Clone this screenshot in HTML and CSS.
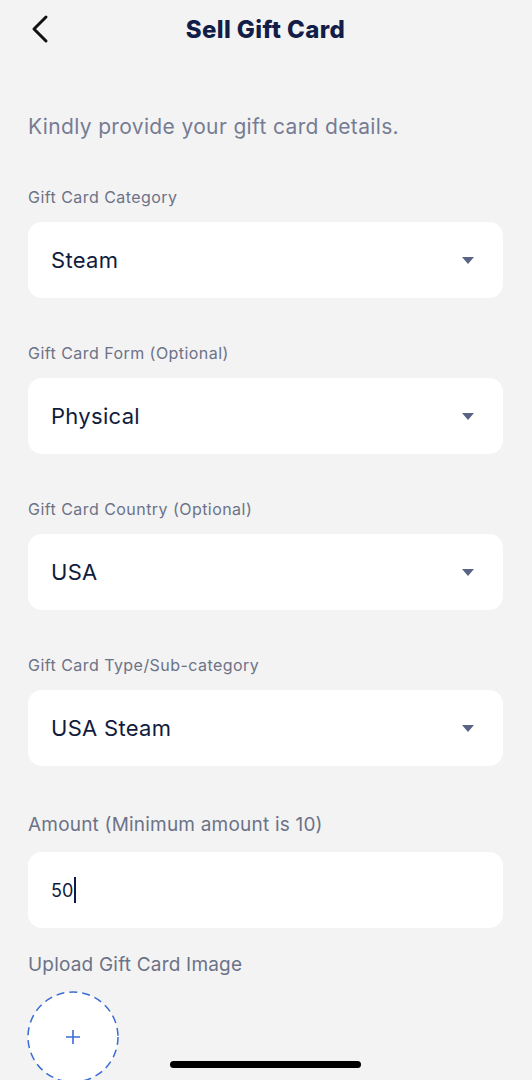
FILE: index.html
```html
<!DOCTYPE html>
<html lang="en">
  <head>
    <meta charset="UTF-8" />
    <meta name="viewport" content="width=device-width, initial-scale=1.0" />
    <title>Sell Gift Card</title>
    <link rel="stylesheet" href="styles.css">
  </head>
  <body>
    <div class="header">
      <button class="back" aria-label="Back">
        <svg width="20" height="30" viewBox="0 0 20 30">
          <path d="M16 3 L4 15 L16 27" fill="none" stroke="#111" stroke-width="3" stroke-linecap="round" stroke-linejoin="round" />
        </svg>
      </button>
      <h1>Sell Gift Card</h1>
      <div></div>
    </div>

    <p class="intro">Kindly provide your gift card details.</p>

    <div class="form">
      <div class="field">
        <label>Gift Card Category</label>
        <div class="select">
          <span>Steam</span>
          <span class="caret"></span>
        </div>
      </div>

      <div class="field">
        <label>Gift Card Form (Optional)</label>
        <div class="select">
          <span>Physical</span>
          <span class="caret"></span>
        </div>
      </div>

      <div class="field">
        <label>Gift Card Country (Optional)</label>
        <div class="select">
          <span>USA</span>
          <span class="caret"></span>
        </div>
      </div>

      <div class="field">
        <label>Gift Card Type/Sub-category</label>
        <div class="select">
          <span>USA Steam</span>
          <span class="caret"></span>
        </div>
      </div>

      <div class="field big">
        <label>Amount (Minimum amount is 10)</label>
        <div class="select input">
          <span>50</span><span class="cursor"></span>
        </div>
      </div>

      <div class="field big upload">
        <label>Upload Gift Card Image</label>
        <div class="circle">
          <svg width="92" height="92" viewBox="0 0 92 92">
            <circle cx="46" cy="46" r="45" fill="#fff" stroke="#3b6cd4" stroke-width="1.5" stroke-dasharray="8 5" />
            <path d="M46 39 V53 M39 46 H53" stroke="#3b6cd4" stroke-width="1.6" />
          </svg>
        </div>
      </div>
    </div>

    <div class="home-bar"></div>
  </body>
</html>
```

FILE: styles.css
```css
body {
  margin: 0;
  padding: 0 29px 0 28px;
  background: #f3f3f3;
  font-family: Inter, "Noto Sans", sans-serif;
  height: 1080px;
  overflow: hidden;
  box-sizing: border-box;
}
.header {
  height: 58px;
  display: grid;
  grid-template-columns: 1fr auto 1fr;
  align-items: center;
}
.back {
  border: none;
  background: none;
  padding: 0;
  width: 24px;
  height: 30px;
  margin-left: 2px;
  display: flex;
  align-items: center;
}
h1 {
  margin: 0;
  font-size: 24px;
  font-weight: 800;
  letter-spacing: 0.4px;
  color: #121d48;
}
.intro {
  margin: 55px 0 0;
  line-height: 28px;
  font-size: 21px;
  color: #767c93;
  letter-spacing: 0.35px;
}
.form {
  display: flex;
  flex-direction: column;
  gap: 45px;
  margin-top: 46px;
}
.field {
  display: flex;
  flex-direction: column;
  gap: 15px;
}
.field label {
  font-size: 16px;
  line-height: 20px;
  color: #6c7288;
  letter-spacing: 0.45px;
}
.field.big label {
  font-size: 19px;
  line-height: 24px;
  letter-spacing: 0.2px;
}
.field.big {
  margin-top: 2px;
}
.field.upload {
  margin-top: -20px;
}
.select {
  height: 76px;
  background: #fff;
  border-radius: 14px;
  display: flex;
  align-items: center;
  justify-content: space-between;
  padding: 0 29px 0 23px;
  font-size: 22px;
  letter-spacing: 0.3px;
  color: #111c3d;
}
.caret {
  width: 0;
  height: 0;
  border-left: 6.5px solid transparent;
  border-right: 6.5px solid transparent;
  border-top: 7px solid #5b6384;
}
.input {
  justify-content: flex-start;
  font-size: 18px;
  letter-spacing: 0;
}
.cursor {
  width: 2px;
  height: 26px;
  background: #0d1a4a;
  margin-left: 1px;
}
.circle {
  width: 92px;
  height: 92px;
  margin-left: -1px;
  margin-top: -1px;
}
.home-bar {
  position: absolute;
  left: 170px;
  top: 1061px;
  width: 191px;
  height: 7px;
  border-radius: 4px;
  background: #000;
}
```
